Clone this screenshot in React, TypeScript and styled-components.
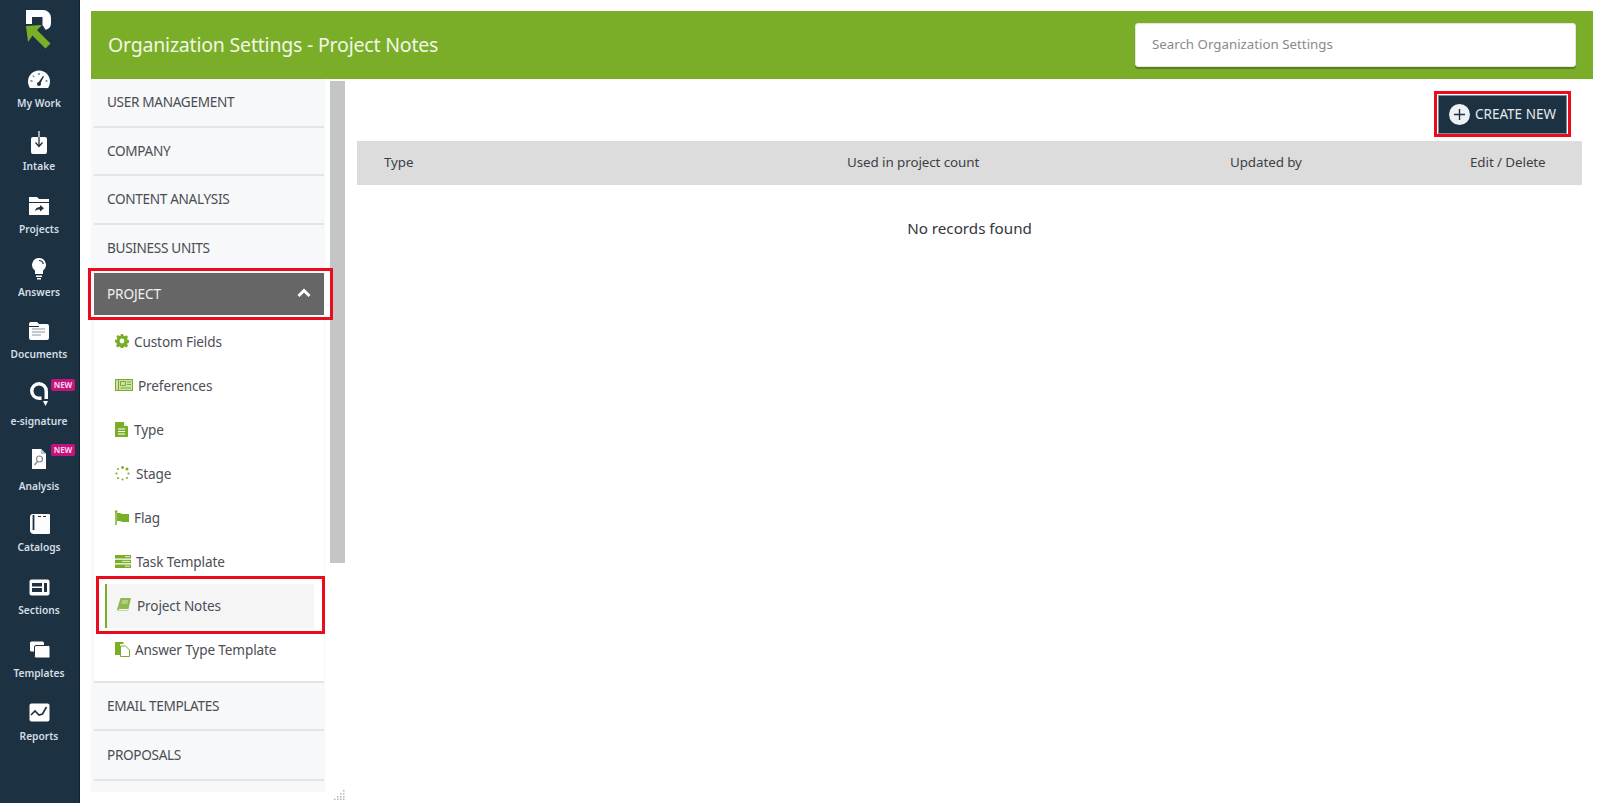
import React from "react";
import styled, { createGlobalStyle } from "styled-components";

const Global = createGlobalStyle`
  html, body { margin: 0; padding: 0; background: #fff; }
  body { font-family: "Noto Sans", "Open Sans", sans-serif; overflow: hidden; }
  * { box-sizing: border-box; }
`;
const Page = styled.div`display: flex; width: 1600px; height: 803px; overflow: hidden;`;
const Rail = styled.nav`
  width: 80px; flex: none; height: 803px; background: #1c3243; border-right: 1px solid #14232f;
  display: flex; flex-direction: column; align-items: flex-start;
`;
const LogoBox = styled.div`width: 78px; height: 64px; padding-top: 10px; display: flex; justify-content: center;`;
const NavItem = styled.div<{ $tall?: boolean }>`
  position: relative; width: 78px; height: ${(p) => (p.$tall ? 65 : 62.85)}px;
  display: flex; flex-direction: column; align-items: center; padding-top: 3px;
`;
const NavIcon = styled.div<{ $tall?: boolean }>`
  height: 26px; margin-bottom: ${(p) => (p.$tall ? 7 : 3)}px; display: flex; align-items: center; justify-content: center;
`;
const NavLabel = styled.span`font-size: 10.2px; line-height: 15px; font-weight: 600; color: #d5dde3; white-space: nowrap;`;
const NewBadge = styled.span`
  position: absolute; top: 1px; left: 51px; width: 24px; height: 12px; border-radius: 2px;
  background: #c5127f; color: #f3d6e8; font-size: 8px; font-weight: 700; line-height: 12px; text-align: center;
`;
const Main = styled.main`flex: 1; min-width: 0; padding: 11px 7px 0 11px; display: flex; flex-direction: column;`;
const Header = styled.header`
  height: 68px; flex: none; background: #7aae29; display: flex; align-items: center; justify-content: space-between;
  padding: 0 17px 0 17px;
`;
const Title = styled.h1`margin: 0 0 2px; font-size: 19.5px; letter-spacing: -0.2px; font-weight: 400; color: #f1f7e6; white-space: nowrap;`;
const Search = styled.input`
  width: 441px; height: 44px; border: 1px solid #e4e4e4; border-radius: 3px; background: #fff; padding: 0 16px 2px;
  font: 400 13.3px "Noto Sans", sans-serif; color: #666; box-shadow: 0 2px 1px rgba(60,80,20,.5); outline: none;
  &::placeholder { color: #8a8a8a; opacity: 1; }
`;
const Body = styled.div`flex: 1; min-height: 0; display: flex;`;
const SidePanel = styled.aside`position: relative; width: 254px; flex: none; height: 724px; display: flex; align-items: flex-start; background: #fff;`;
const MenuList = styled.div`width: 234px; flex: none; height: 713px; background: #f7f8fa;`;
const ScrollTrack = styled.div`width: 15px; margin-left: 5px; flex: none; padding-top: 2px;`;
const ScrollThumb = styled.div`width: 15px; height: 482px; background: #c4c5c7;`;
const Grip = styled.svg`position: absolute; right: 0; bottom: 3px;`;
const Section = styled.div<{ $h: number; $flat?: boolean }>`
  height: ${(p) => p.$h}px; margin: 0 1px 0 3px; padding: 0 0 2px 13px; display: flex; align-items: center;
  border-bottom: ${(p) => (p.$flat ? "0" : "2px solid #e3e4e6")}; font-size: 13.6px; letter-spacing: -0.32px; color: #4a4d52; white-space: nowrap;
`;
const Open = styled.div`
  position: relative; height: 42px; margin: 2px 1px 0 3px; padding: 0 13px 2px; display: flex; align-items: center; justify-content: space-between;
  background: #666; color: #f2f2f2; font-size: 13.6px; letter-spacing: -0.1px;
  &::after { content: ""; position: absolute; inset: -5px -9px -5px -6px; border: 3px solid #ec0b1c; z-index: 2; }
`;
const SubList = styled.div`background: #fff; height: 368px; padding-top: 5px; margin: 0 1px 0 3px; border-bottom: 2px solid #e3e4e6;`;
const SubItem = styled.div<{ $active?: boolean; $gap: number }>`
  position: relative; height: 44px; margin-left: ${(p) => (p.$active ? 11 : 21)}px; width: ${(p) => (p.$active ? 209 : 190)}px;
  padding: 0 0 2px ${(p) => (p.$active ? 10 : 0)}px; display: flex; align-items: center; gap: ${(p) => p.$gap}px;
  font-size: 13.6px; letter-spacing: -0.13px; color: #4b4e55; white-space: nowrap;
  background: ${(p) => (p.$active ? "#f5f5f5" : "transparent")};
  border-left: ${(p) => (p.$active ? "2px solid #7aae29" : "0")};
  ${(p) => p.$active && `&::after { content: ""; position: absolute; inset: -8px -11px -6px -11px; border: 3px solid #ec0b1c; }`}
`;
const Content = styled.section`flex: 1; min-width: 0; padding-left: 12px; display: flex; flex-direction: column;`;
const Actions = styled.div`height: 62px; display: flex; justify-content: flex-end; align-items: flex-start; padding: 16px 26px 0 0;`;
const CreateButton = styled.button`
  position: relative; width: 129px; height: 39px; background: #1c3243; border: 1px solid #7c8a94; border-radius: 0; color: #e6eaec;
  font: 400 13.5px "Noto Sans", sans-serif; letter-spacing: 0; display: flex; align-items: center; gap: 5px; padding: 0 0 1px 10px; white-space: nowrap;
  &::after { content: ""; position: absolute; inset: -5px -5px -4px -5px; border: 3px solid #ec0b1c; }
`;
const PlusDisc = styled.span`
  width: 21px; height: 21px; border-radius: 50%; background: #eef1f4; display: flex; align-items: center; justify-content: center; flex: none;
`;
const Table = styled.div`width: 1225px;`;
const HeadRow = styled.div`
  height: 44px; background: #dcdcdc; display: grid; grid-template-columns: 463px 383px 240px 1fr;
  align-items: center; padding: 0 0 3px 27px; font-size: 13.4px; letter-spacing: -0.08px; color: #3c3f44; white-space: nowrap;
`;
const Empty = styled.div`text-align: center; padding-top: 32px; font-size: 15.2px; line-height: 22px; color: #33363a;`;

const W = "#fdfdfd";
const D = "#1c3243";
const G = "#7aae29";
const Logo = () => (
  <svg width="28" height="40" viewBox="0 0 28 40">
    <path d="M1 0H18a8 8 0 0 1 8 8V13a7 7 0 0 1-5.500 6.800L17.500 15V7H7v7H1z" fill={W} />
    <path d="M1 16l16-1-5 5 13.500 13.500-5 5L7.500 25.500 3 32z" fill={G} />
  </svg>
);
const Gauge = () => (
  <svg width="24" height="22" viewBox="0 0 24 22">
    <path d="M12 1.500C5.600 1.500 1 6.600 1 12.500c0 2.600.8 4.800 2 6.500h18c1.200-1.700 2-3.900 2-6.500 0-5.900-4.600-11-11-11z" fill={W} />
    <path d="M11 14l5-7 1 .6-4 7.600z" fill={D} />
    <circle cx="12" cy="15" r="2" fill={D} />
    <path d="M12 4v2M6 6.500l1.200 1.400M3.500 12h2M18.500 12h2" stroke={D} strokeWidth="1" />
  </svg>
);
const Intake = () => (
  <svg width="18" height="24" viewBox="0 0 18 24">
    <rect x="1" y="6" width="16" height="17" rx="2" fill={W} />
    <path d="M9 6v9M5.500 11.500L9 15.500l3.500-4" stroke={D} strokeWidth="1.300" fill="none" />
    <path d="M9 0v6" stroke={W} strokeWidth="1.200" />
  </svg>
);
const Folder = () => (
  <svg width="22" height="20" viewBox="0 0 22 20">
    <path d="M1 1h8l2 2h10v3H1z" fill={W} />
    <path d="M1 7h20v12H1z" fill={W} />
    <path d="M7 15c.5-3 2.500-4 5-4V9l4 3.200-4 3.200v-2c-2 0-3.500.3-5 1.600z" fill={D} />
  </svg>
);
const Bulb = () => (
  <svg width="16" height="24" viewBox="0 0 16 24">
    <path d="M8 1a7 7 0 0 0-4 12.700V17h8v-3.300A7 7 0 0 0 8 1z" fill={W} />
    <path d="M5 18.500h6v1.500H5zM6 21h4v1.500H6z" fill={W} />
    <path d="M8 3.500a4.500 4.500 0 0 1 4.300 3.500" stroke={D} strokeWidth="1.200" fill="none" />
  </svg>
);
const Docs = () => (
  <svg width="22" height="20" viewBox="0 0 22 20">
    <path d="M1 3a2 2 0 0 1 2-2h6l2 2h8a2 2 0 0 1 2 2v12a2 2 0 0 1-2 2H3a2 2 0 0 1-2-2z" fill={W} />
    <path d="M4 8h13M4 11h13M4 14h9" stroke="#8796a1" strokeWidth="1.100" />
    <path d="M1 5.500h10" stroke={D} strokeWidth="1" />
  </svg>
);
const Sign = () => (
  <svg width="20" height="26" viewBox="0 0 20 26">
    <path d="M10 1a9 9 0 1 0 0 18h2.500v-3.500H10a5.500 5.500 0 1 1 5.500-5.500v8h3.500v-8A9 9 0 0 0 10 1z" fill={W} />
    <path d="M14 20h5l-2.500 5z" fill={W} />
  </svg>
);
const Analysis = () => (
  <svg width="16" height="24" viewBox="0 0 16 24">
    <path d="M1 2h9l5 5v15H1z" fill={W} />
    <circle cx="8.500" cy="12" r="3" fill="none" stroke="#7d8c98" strokeWidth="1.200" />
    <path d="M6.500 14.500l-3 3.500" stroke="#7d8c98" strokeWidth="1.400" />
    <path d="M10 2l5 5h-5z" fill="#b9c3ca" />
  </svg>
);
const Book = () => (
  <svg width="21" height="21" viewBox="0 0 21 21">
    <path d="M4 0h16a1 1 0 0 1 1 1v18a1 1 0 0 1-1 1H5a4 4 0 0 1-4-3V3a3 3 0 0 1 3-3z" fill={W} />
    <path d="M4.500 1v15" stroke={D} strokeWidth="1.800" />
    <path d="M9 2.500h3M14 2.500h3" stroke={D} strokeWidth="1.200" />
  </svg>
);
const SectionsIcon = () => (
  <svg width="21" height="17" viewBox="0 0 21 17">
    <rect x="0.500" y="0.500" width="20" height="16" rx="2" fill={W} />
    <path d="M3 4h10v3.500H3zM3 9h10v4H3zM15 4h3v9h-3z" fill={D} />
  </svg>
);
const TemplatesIcon = () => (
  <svg width="21" height="17" viewBox="0 0 21 17">
    <path d="M1 2a1.500 1.500 0 0 1 1.500-1.500h11A1.500 1.500 0 0 1 15 2v7a1.500 1.500 0 0 1-1.500 1.500h-11A1.500 1.500 0 0 1 1 9z" fill={W} />
    <rect x="5.500" y="4.500" width="15.500" height="12.500" rx="1.500" fill={W} stroke={D} strokeWidth="1" />
  </svg>
);
const ReportsIcon = () => (
  <svg width="21" height="19" viewBox="0 0 21 19">
    <rect x="0.500" y="0.500" width="20" height="18" rx="2" fill={W} />
    <path d="M2 12l4-4 4 4 3.500-1 4-7" fill="none" stroke={D} strokeWidth="1.600" />
  </svg>
);

const CustomIcon = () => (
  <svg width="14" height="14" viewBox="0 0 14 14">
    <path fill={G} fillRule="evenodd" d="M5.800 0h2.400l.4 1.800 1.200.5 1.600-1 1.700 1.700-1 1.600.5 1.200 1.800.4v2.400l-1.800.4-.5 1.200 1 1.600-1.700 1.700-1.600-1-1.200.5-.4 1.800H5.800l-.4-1.800-1.200-.5-1.600 1-1.700-1.700 1-1.600-.5-1.200L0 8.200V5.800l1.800-.4.500-1.200-1-1.600L3 .9l1.600 1 1.200-.5zM7 4.600a2.400 2.400 0 1 0 0 4.800 2.400 2.400 0 0 0 0-4.800z" />
  </svg>
);
const PrefIcon = () => (
  <svg width="18" height="12" viewBox="0 0 18 12">
    <rect x="0.500" y="0.500" width="17" height="11" fill="#cfe0ae" stroke={G} />
    <path d="M3.500 1v10M5.500 2.500h5v4h-5zM12 3h4M12 5.500h4M5.500 9h10.500" stroke={G} fill="none" />
  </svg>
);
const TypeIcon = () => (
  <svg width="13" height="15" viewBox="0 0 13 15">
    <path d="M0 0h8.500L13 4.500V15H0z" fill={G} />
    <path d="M9 0l4 4H9z" fill="#e5efd2" />
    <path d="M3 7h7M3 9.500h7M3 12h7" stroke="#fff" strokeWidth="1" />
  </svg>
);
const StageIcon = () => (
  <svg width="15" height="15" viewBox="0 0 15 15" fill={G}>
    <circle cx="7.500" cy="1.500" r="1.400" /><circle cx="12" cy="3" r="1.500" /><circle cx="13.500" cy="7.500" r="1.100" />
    <circle cx="12" cy="12" r="1" /><circle cx="7.500" cy="13.500" r="1" /><circle cx="3" cy="12" r="1.100" />
    <circle cx="1.500" cy="7.500" r="1.100" /><circle cx="3" cy="3" r="1" />
  </svg>
);
const FlagIcon = () => (
  <svg width="14" height="15" viewBox="0 0 14 15">
    <path d="M1 1.500V15" stroke={G} strokeWidth="1.500" />
    <circle cx="1.200" cy="1.500" r="1.300" fill={G} />
    <path d="M2 3h3l2 1h7v8H7l-2-1H2z" fill={G} />
  </svg>
);
const TaskIcon = () => (
  <svg width="16" height="13" viewBox="0 0 16 13">
    <path d="M0 0h16v3.500H0zM0 4.700h16v3.500H0zM0 9.400h16V13H0z" fill={G} />
    <path d="M10 1.700h5M7 6.400h8M10 11.200h5" stroke="#e5efd2" strokeWidth="1" />
  </svg>
);
const NotesIcon = () => (
  <svg width="14" height="14" viewBox="0 0 14 14">
    <path d="M3.500 0H14l-2.500 11H2L1 12.500h10.200l.3.500H1.500A1.500 1.500 0 0 1 .2 11z" fill="#8fb84e" />
    <path d="M5 3h6M4.500 5h6" stroke="#e5efd2" strokeWidth=".8" />
  </svg>
);
const AnswerIcon = () => (
  <svg width="15" height="15" viewBox="0 0 15 15">
    <path d="M0 0h8l1 2H5v11H0z" fill={G} />
    <path d="M5.500 4h5l4 4v6.500h-9z" fill="#fff" stroke={G} />
  </svg>
);

const navs = [
  { label: "My Work", icon: <Gauge /> },
  { label: "Intake", icon: <Intake /> },
  { label: "Projects", icon: <Folder /> },
  { label: "Answers", icon: <Bulb /> },
  { label: "Documents", icon: <Docs /> },
  { label: "e-signature", icon: <Sign />, isNew: true },
  { label: "Analysis", icon: <Analysis />, isNew: true },
  { label: "Catalogs", icon: <Book /> },
  { label: "Sections", icon: <SectionsIcon /> },
  { label: "Templates", icon: <TemplatesIcon /> },
  { label: "Reports", icon: <ReportsIcon /> },
];
const subs = [
  { label: "Custom Fields", icon: <CustomIcon />, gap: 5 },
  { label: "Preferences", icon: <PrefIcon />, gap: 5 },
  { label: "Type", icon: <TypeIcon />, gap: 6 },
  { label: "Stage", icon: <StageIcon />, gap: 6 },
  { label: "Flag", icon: <FlagIcon />, gap: 5 },
  { label: "Task Template", icon: <TaskIcon />, gap: 5 },
  { label: "Project Notes", icon: <NotesIcon />, gap: 6, active: true },
  { label: "Answer Type Template", icon: <AnswerIcon />, gap: 5 },
];

export default function App() {
  return (
    <Page>
      <Global />
      <Rail>
        <LogoBox><Logo /></LogoBox>
        {navs.map((n) => (
          <NavItem key={n.label} $tall={n.isNew}>
            <NavIcon $tall={n.isNew}>{n.icon}</NavIcon>
            <NavLabel>{n.label}</NavLabel>
            {n.isNew && <NewBadge>NEW</NewBadge>}
          </NavItem>
        ))}
      </Rail>
      <Main>
        <Header>
          <Title>Organization Settings - Project Notes</Title>
          <Search placeholder="Search Organization Settings" readOnly />
        </Header>
        <Body>
          <SidePanel>
            <MenuList>
              <Section $h={49}>USER MANAGEMENT</Section>
              <Section $h={48}>COMPANY</Section>
              <Section $h={49}>CONTENT ANALYSIS</Section>
              <Section $h={46} $flat>BUSINESS UNITS</Section>
              <Open>
                PROJECT
                <svg width="14" height="10" viewBox="0 0 14 10"><path d="M1.500 8L7 2.500 12.500 8" fill="none" stroke="#fff" strokeWidth="3" /></svg>
              </Open>
              <SubList>
                {subs.map((s) => (
                  <SubItem key={s.label} $active={s.active} $gap={s.gap}>
                    {s.icon}
                    {s.label}
                  </SubItem>
                ))}
              </SubList>
              <Section $h={48}>EMAIL TEMPLATES</Section>
              <Section $h={50}>PROPOSALS</Section>
            </MenuList>
            <ScrollTrack><ScrollThumb /></ScrollTrack>
            <Grip width="11" height="11" viewBox="0 0 11 11" fill="#b5b5b5">
              <rect x="9" y="1" width="1.500" height="1.500" /><rect x="6" y="4" width="1.500" height="1.500" /><rect x="9" y="4" width="1.500" height="1.500" />
              <rect x="3" y="7" width="1.500" height="1.500" /><rect x="6" y="7" width="1.500" height="1.500" /><rect x="9" y="7" width="1.500" height="1.500" />
              <rect x="0" y="9.500" width="1.500" height="1.500" /><rect x="3" y="9.500" width="1.500" height="1.500" /><rect x="6" y="9.500" width="1.500" height="1.500" /><rect x="9" y="9.500" width="1.500" height="1.500" />
            </Grip>
          </SidePanel>
          <Content>
            <Actions>
              <CreateButton>
                <PlusDisc>
                  <svg width="11" height="11" viewBox="0 0 11 11"><path d="M5.500 0v11M0 5.500h11" stroke="#1c3243" strokeWidth="1.400" /></svg>
                </PlusDisc>
                CREATE NEW
              </CreateButton>
            </Actions>
            <Table>
              <HeadRow>
                <span>Type</span>
                <span>Used in project count</span>
                <span>Updated by</span>
                <span>Edit / Delete</span>
              </HeadRow>
              <Empty>No records found</Empty>
            </Table>
          </Content>
        </Body>
      </Main>
    </Page>
  );
}
